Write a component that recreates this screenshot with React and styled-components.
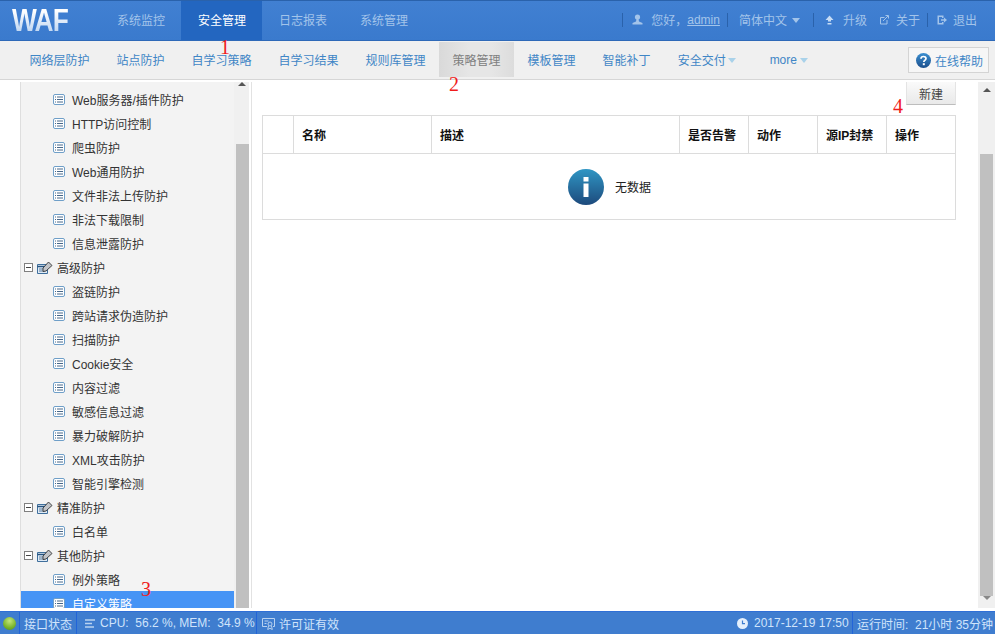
import styled, { createGlobalStyle } from 'styled-components';

const GlobalStyle = createGlobalStyle`
    html, body {
        margin: 0;
        padding: 0;
        height: 100%;
        overflow: hidden;
        background: #fff;
    }
    body {
        font-family: "Liberation Sans", "Noto Sans CJK SC", sans-serif;
        font-size: 12px;
    }
`;

const Page = styled.div`
    position: relative;
    display: flex;
    flex-direction: column;
    height: 100vh;
    overflow: hidden;
`;

const Header = styled.div`
    display: flex;
    align-items: stretch;
    height: 41px;
    box-sizing: border-box;
    flex-shrink: 0;
    background: linear-gradient(#4180d2, #3a7acd);
    border-top: 1px solid #2a62ab;
    border-bottom: 1px solid #2e69b8;
    color: #a3c4ea;
`;

const Logo = styled.div`
    width: 100px;
    padding-left: 12px;
    box-sizing: border-box;
    font-size: 31px;
    line-height: 39px;
    font-weight: bold;
    letter-spacing: -1px;
`;

const LogoText = styled.span`
    display: inline-block;
    transform: scaleX(0.85);
    transform-origin: left center;
    background: linear-gradient(#ffffff 25%, #b9d2f0 85%);
    background-clip: text;
    -webkit-background-clip: text;
    color: transparent;
`;

const MainTab = styled.div`
    width: 81px;
    box-sizing: border-box;
    padding: 0 0 2px 1px;
    display: flex;
    align-items: center;
    justify-content: center;
    color: ${(props) => (props.active ? '#fff' : '#a3c4ea')};
    background: ${(props) => (props.active ? '#2366c0' : 'transparent')};
`;

const UserBar = styled.div`
    margin-left: auto;
    display: flex;
    align-items: center;
    padding: 0 18px 2px 0;
`;

const BarSep = styled.span`
    width: 1px;
    height: 14px;
    background: #2a62ab;
    margin: ${(props) => props.margin || '0'};
`;

const BarText = styled.span`
    margin: ${(props) => props.margin || '0'};
    white-space: nowrap;
`;

const AdminLink = styled.span`
    text-decoration: underline;
    margin-right: 7px;
`;

const SubNav = styled.div`
    display: flex;
    align-items: stretch;
    height: 39px;
    box-sizing: border-box;
    flex-shrink: 0;
    padding: 1px 6px 2px 16px;
    background: #f0f0f0;
    border-bottom: 1px solid #d6d6d6;
`;

const SubItem = styled.div`
    display: flex;
    align-items: center;
    box-sizing: border-box;
    padding: 0 13.5px;
    width: ${(props) => props.width || 'auto'};
    color: ${(props) => (props.active ? '#808080' : '#3f86c6')};
    background: ${(props) => (props.active ? 'linear-gradient(90deg, #d9d9d9, #e6e6e6 40%, #e6e6e6 70%, #dcdcdc)' : 'transparent')};
    white-space: nowrap;
`;

const Caret = styled.span`
    width: 0;
    height: 0;
    margin: 1px 0 0 ${(props) => props.gap || '2px'};
    border-left: 4.5px solid transparent;
    border-right: 4.5px solid transparent;
    border-top: 5px solid ${(props) => props.color || '#a9d2ea'};
`;

const HelpButton = styled.div`
    margin: 5px 0 4px auto;
    width: 81px;
    box-sizing: border-box;
    display: flex;
    align-items: center;
    justify-content: center;
    gap: 4px;
    padding-left: 2px;
    background: #f6f6f6;
    border: 1px solid #d4d4d4;
    color: #3f86c6;
`;

const Body = styled.div`
    flex: 1;
    min-height: 0;
    display: flex;
    padding: 2px 0 3px 20px;
`;

const Sidebar = styled.div`
    width: 229px;
    box-sizing: border-box;
    display: flex;
    background: #f3f3f3;
    border-left: 1px solid #dedede;
    overflow: hidden;
`;

const TreeList = styled.div`
    flex: 1;
    padding-top: 5px;
    overflow: hidden;
`;

const TreeRow = styled.div`
    display: flex;
    align-items: center;
    height: 24px;
    flex-shrink: 0;
    padding-left: ${(props) => (props.group ? '3px' : '32px')};
    gap: ${(props) => (props.group ? '4px' : '7px')};
    color: ${(props) => (props.selected ? '#fff' : '#333')};
    background: ${(props) => (props.selected ? '#4694f5' : 'transparent')};
    white-space: nowrap;
`;

const ScrollTrack = styled.div`
    width: ${(props) => props.width};
    flex-shrink: 0;
    display: flex;
    flex-direction: column;
    align-items: center;
    background: #f0f0f0;
`;

const ScrollThumb = styled.div`
    flex: 1;
    align-self: stretch;
    margin: ${(props) => props.margin};
    background: #c0c0c0;
`;

const ArrowUp = styled.span`
    width: 0;
    height: 0;
    margin-top: ${(props) => props.top};
    border-left: 4px solid transparent;
    border-right: 4px solid transparent;
    border-bottom: 4px solid #555;
`;

const ArrowDown = styled.span`
    width: 0;
    height: 0;
    margin-bottom: 8px;
    border-left: 4px solid transparent;
    border-right: 4px solid transparent;
    border-top: 4px solid #888;
`;

const Main = styled.div`
    flex: 1;
    min-width: 0;
    display: flex;
    margin-left: 2px;
    border-left: 1px solid #e2e2e2;
`;

const Pane = styled.div`
    flex: 1;
    min-width: 0;
    padding: 0 22px 0 10px;
`;

const Toolbar = styled.div`
    display: flex;
    justify-content: flex-end;
    height: 33px;
`;

const NewButton = styled.div`
    width: 50px;
    height: 23px;
    box-sizing: border-box;
    display: flex;
    align-items: center;
    justify-content: center;
    color: #444;
    background: linear-gradient(#fafafa, #e9e9e9);
    border: 1px solid #e4e4e4;
    border-top: none;
    border-bottom: 1px solid #bdbdbd;
`;

const Table = styled.table`
    width: 693px;
    table-layout: fixed;
    border-collapse: collapse;
    border: 1px solid #dcdcdc;
`;

const Th = styled.th`
    width: ${(props) => props.width};
    height: 38px;
    padding: 0 0 1px 8px;
    box-sizing: border-box;
    text-align: left;
    font-weight: bold;
    font-size: 12px;
    color: #111;
    border: 1px solid #dcdcdc;
    white-space: nowrap;
`;

const EmptyCell = styled.td`
    height: 65px;
    padding: 0;
`;

const EmptyBox = styled.div`
    display: flex;
    align-items: center;
    justify-content: center;
    gap: 11px;
    color: #222;
    padding-left: 1px;
`;

const Footer = styled.div`
    height: 23px;
    box-sizing: border-box;
    flex-shrink: 0;
    display: flex;
    align-items: stretch;
    background: #3f7dcf;
    border-top: 1px solid #2f6fd6;
    color: #d0e4fb;
`;

const FootCell = styled.div`
    display: flex;
    align-items: center;
    gap: ${(props) => props.gap || '0'};
    width: ${(props) => props.width || 'auto'};
    box-sizing: border-box;
    padding: 0 ${(props) => props.right || '0'} 0 ${(props) => props.left || '0'};
    margin-left: ${(props) => (props.push ? 'auto' : '0')};
    border-right: ${(props) => (props.noLine ? 'none' : '1px solid #2264d8')};
    white-space: nowrap;
`;

const Led = styled.span`
    width: 13px;
    height: 13px;
    border-radius: 50%;
    background: radial-gradient(circle at 50% 30%, #c4e67a, #7ab52c 60%, #4f8a1c);
`;

const Mark = styled.span`
    position: absolute;
    left: ${(props) => props.x}px;
    top: ${(props) => props.y}px;
    font-family: "Liberation Serif", serif;
    font-size: 20px;
    line-height: 20px;
    color: #f01c1c;
    pointer-events: none;
`;

const ListIcon = () => (
    <svg width="12" height="11" viewBox="0 0 12 11">
        <rect x="0.5" y="0.5" width="11" height="10" rx="1.5" fill="#fff" stroke="#6f9fc8" />
        <path d="M2 3h1M4 3h6M2 5.5h1M4 5.5h6M2 8h1M4 8h6" stroke="#48688a" strokeWidth="1" />
    </svg>
);

const ToggleIcon = () => (
    <svg width="9" height="9" viewBox="0 0 9 9">
        <rect x="0.5" y="0.5" width="8" height="8" fill="#fff" stroke="#808080" />
        <path d="M2 4.5h5" stroke="#444" />
    </svg>
);

const FolderIcon = () => (
    <svg width="16" height="13" viewBox="0 0 16 13">
        <path d="M0.5 3.5h10v9h-10z" fill="#dfeaf5" stroke="#3f6f9c" />
        <path d="M0.5 5.5h10" stroke="#24527f" strokeWidth="1.5" />
        <path d="M2 8h6M2 10h6" stroke="#5f7f9e" />
        <path d="M6 7l5.500-6 3.500 3.500-6 5.500-3 .5z" fill="#c0c3c8" stroke="#333" strokeWidth="0.9" />
    </svg>
);

const UserIcon = () => (
    <svg width="11" height="11" viewBox="0 0 11 11">
        <circle cx="5.500" cy="3" r="2.600" fill="#a3c4ea" />
        <path d="M4.500 5h2l.5 2.500 3.500 1.500v1.500h-10v-1.500l3.500-1.500z" fill="#a3c4ea" />
    </svg>
);

const UpgradeIcon = () => (
    <svg width="9" height="10" viewBox="0 0 9 10">
        <path d="M4.500 0.500l4 4.500h-2.500v1.500h-3v-1.500h-2.500zM2.500 8h4v1.500h-4z" fill="#c6dcf5" />
    </svg>
);

const AboutIcon = () => (
    <svg width="10" height="10" viewBox="0 0 10 10" fill="none" stroke="#a3c4ea">
        <path d="M5.500 2.500h-4v6.500h6.500v-4" />
        <path d="M4 6l5-5M6.500 0.500h3v3" />
    </svg>
);

const LogoutIcon = () => (
    <svg width="10" height="10" viewBox="0 0 10 10">
        <path d="M0.500 0.500h6v2.500h-1.500v-1h-3v6h3v-1h1.500v2.500h-6z" fill="#a3c4ea" />
        <path d="M4 4.200h3v-1.700l3 2.500-3 2.500v-1.700h-3z" fill="#a3c4ea" />
    </svg>
);

const HelpIcon = () => (
    <svg width="15" height="15" viewBox="0 0 15 15">
        <defs>
            <linearGradient id="helpFill" x1="0" y1="0" x2="0" y2="1">
                <stop offset="0" stopColor="#3b8fd0" />
                <stop offset="1" stopColor="#1c4f8c" />
            </linearGradient>
        </defs>
        <circle cx="7.500" cy="7.500" r="7.500" fill="url(#helpFill)" />
        <path d="M5 5.800c0-3 5-3 5 -.2 0 1.800-2.200 1.800-2.200 3.400" fill="none" stroke="#fff" strokeWidth="1.700" />
        <rect x="6.800" y="10.200" width="2" height="2" fill="#fff" />
    </svg>
);

const InfoIcon = () => (
    <svg width="36" height="36" viewBox="0 0 36 36">
        <defs>
            <linearGradient id="infoFill" x1="0" y1="0" x2="0" y2="1">
                <stop offset="0" stopColor="#2f96c4" />
                <stop offset="1" stopColor="#1d4a7c" />
            </linearGradient>
        </defs>
        <circle cx="18" cy="18" r="18" fill="url(#infoFill)" />
        <rect x="15.500" y="8" width="5" height="4.500" fill="#fff" />
        <rect x="15.500" y="14.500" width="5" height="13.500" fill="#fff" />
    </svg>
);

const BarsIcon = () => (
    <svg width="11" height="9" viewBox="0 0 11 9">
        <path d="M0 1h10M0 4.500h7M0 8h9" stroke="#b9d2f0" strokeWidth="1.600" />
    </svg>
);

const LicenseIcon = () => (
    <svg width="13" height="13" viewBox="0 0 13 13" fill="none" stroke="#b9d2f0">
        <path d="M5 9.500h-4.500v-8h12v8h-1.500" />
        <circle cx="8" cy="7" r="2" />
        <path d="M6.500 9l-.8 3.500 2.300-1.200 2.300 1.200-.8-3.500M2.500 4h4M2.500 6.500h2" />
    </svg>
);

const ClockIcon = () => (
    <svg width="11" height="11" viewBox="0 0 11 11">
        <circle cx="5.500" cy="5.500" r="5.500" fill="#e4effc" />
        <path d="M5.500 2.500v3.200h2.500" fill="none" stroke="#3f7dcf" strokeWidth="1.200" />
    </svg>
);

const mainTabs = ['系统监控', '安全管理', '日志报表', '系统管理'];

const subItems = ['网络层防护', '站点防护', '自学习策略', '自学习结果', '规则库管理', '策略管理', '模板管理', '智能补丁'];

const tree = [
    { name: 'Web服务器/插件防护' },
    { name: 'HTTP访问控制' },
    { name: '爬虫防护' },
    { name: 'Web通用防护' },
    { name: '文件非法上传防护' },
    { name: '非法下载限制' },
    { name: '信息泄露防护' },
    { name: '高级防护', group: true },
    { name: '盗链防护' },
    { name: '跨站请求伪造防护' },
    { name: '扫描防护' },
    { name: 'Cookie安全' },
    { name: '内容过滤' },
    { name: '敏感信息过滤' },
    { name: '暴力破解防护' },
    { name: 'XML攻击防护' },
    { name: '智能引擎检测' },
    { name: '精准防护', group: true },
    { name: '白名单' },
    { name: '其他防护', group: true },
    { name: '例外策略' },
    { name: '自定义策略', selected: true },
];

const columns = [
    { title: '', width: '31px' },
    { title: '名称', width: '138px' },
    { title: '描述', width: '248px' },
    { title: '是否告警', width: '69px' },
    { title: '动作', width: '69px' },
    { title: '源IP封禁', width: '69px' },
    { title: '操作', width: '69px' },
];

const App = () => {
    return (
        <Page>
            <GlobalStyle />
            <Header>
                <Logo><LogoText>WAF</LogoText></Logo>
                {mainTabs.map((tab) => (
                    <MainTab key={tab} active={tab === '安全管理'}>{tab}</MainTab>
                ))}
                <UserBar>
                    <BarSep margin="0 9px 0 0" />
                    <UserIcon />
                    <BarText margin="0 0 0 8px">您好，</BarText>
                    <AdminLink>admin</AdminLink>
                    <BarSep margin="0 11px 0 0" />
                    <BarText>简体中文</BarText>
                    <Caret gap="5px" color="#a3c4ea" />
                    <BarSep margin="0 11px 0 13px" />
                    <UpgradeIcon />
                    <BarText margin="0 12px 0 9px">升级</BarText>
                    <AboutIcon />
                    <BarText margin="0 7px 0 7px">关于</BarText>
                    <BarSep margin="0 9px 0 0" />
                    <LogoutIcon />
                    <BarText margin="0 0 0 6px">退出</BarText>
                </UserBar>
            </Header>
            <SubNav>
                {subItems.map((item) => (
                    <SubItem key={item} active={item === '策略管理'}>{item}</SubItem>
                ))}
                <SubItem width="92px">安全交付<Caret /></SubItem>
                <SubItem>more<Caret gap="3px" /></SubItem>
                <HelpButton><HelpIcon />在线帮助</HelpButton>
            </SubNav>
            <Body>
                <Sidebar>
                    <TreeList>
                        {tree.map((node) => (
                            <TreeRow key={node.name} group={node.group} selected={node.selected}>
                                {node.group ? <ToggleIcon /> : <ListIcon />}
                                {node.group && <FolderIcon />}
                                {node.name}
                            </TreeRow>
                        ))}
                    </TreeList>
                    <ScrollTrack width="15px">
                        <ArrowUp top="0px" />
                        <ScrollThumb margin="58px 0 0 2px" />
                    </ScrollTrack>
                </Sidebar>
                <Main>
                    <Pane>
                        <Toolbar>
                            <NewButton>新建</NewButton>
                        </Toolbar>
                        <Table>
                            <thead>
                                <tr>
                                    {columns.map((col) => (
                                        <Th key={col.width + col.title} width={col.width}>{col.title}</Th>
                                    ))}
                                </tr>
                            </thead>
                            <tbody>
                                <tr>
                                    <EmptyCell colSpan={7}>
                                        <EmptyBox><InfoIcon />无数据</EmptyBox>
                                    </EmptyCell>
                                </tr>
                            </tbody>
                        </Table>
                    </Pane>
                    <ScrollTrack width="17px">
                        <ArrowUp top="6px" />
                        <ScrollThumb margin="62px 2px 0 2px" />
                        <ArrowDown />
                    </ScrollTrack>
                </Main>
            </Body>
            <Footer>
                <FootCell width="20px" left="3px"><Led /></FootCell>
                <FootCell width="57px" left="4px">接口状态</FootCell>
                <FootCell width="180px" left="8px" gap="4px">
                    <BarsIcon />CPU:&nbsp; 56.2 %, MEM:&nbsp; 34.9 %
                </FootCell>
                <FootCell noLine left="5px" gap="4px"><LicenseIcon />许可证有效</FootCell>
                <FootCell push width="123px" left="7px" gap="6px">
                    <ClockIcon />2017-12-19 17:50
                </FootCell>
                <FootCell noLine left="4px" right="2px">运行时间:&nbsp; 21小时 35分钟</FootCell>
            </Footer>
            <Mark x={220} y={37}>1</Mark>
            <Mark x={449} y={74}>2</Mark>
            <Mark x={141} y={579}>3</Mark>
            <Mark x={893} y={96}>4</Mark>
        </Page>
    );
};

export default App;
